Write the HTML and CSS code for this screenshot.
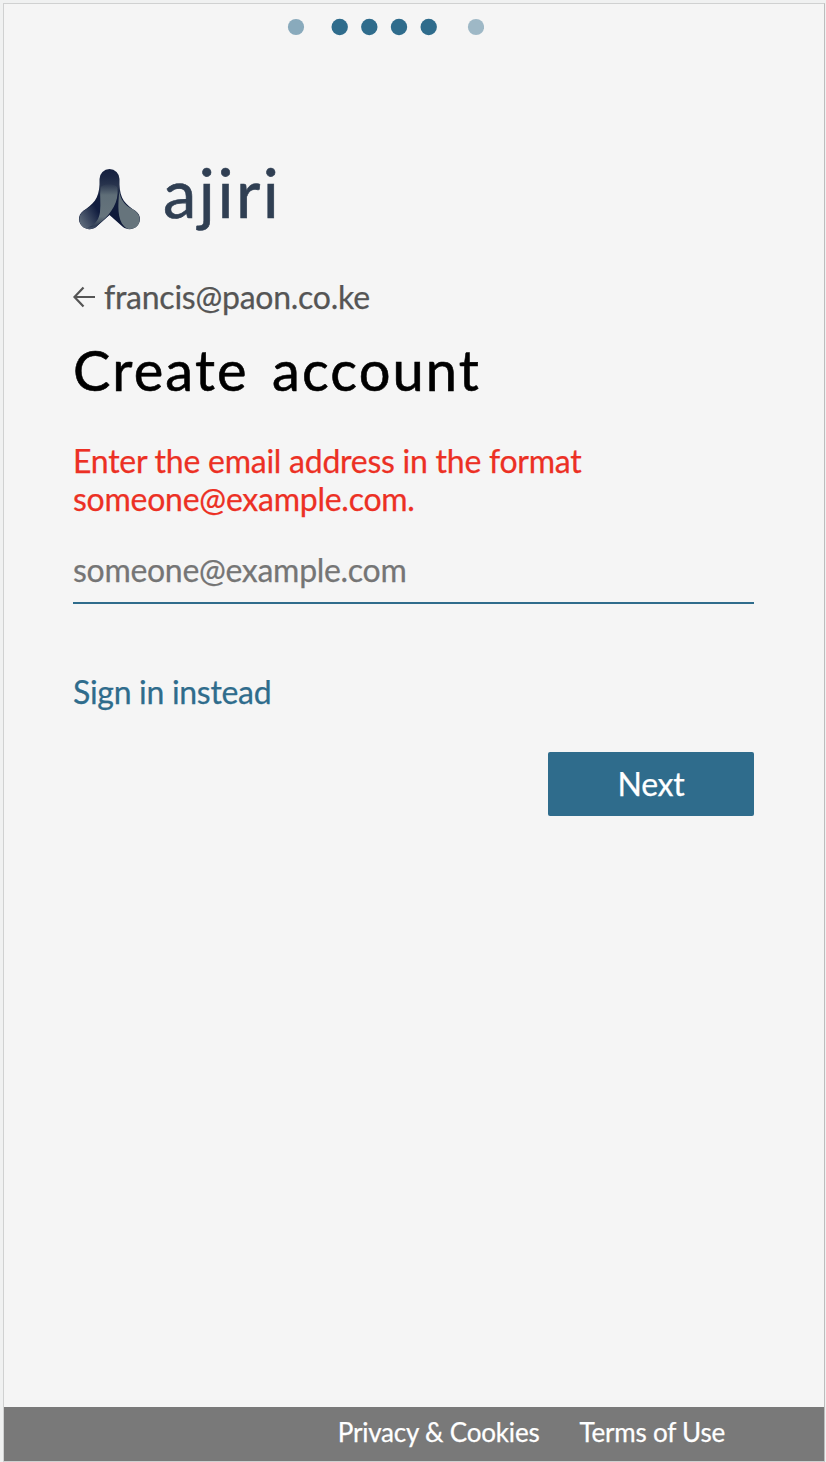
FILE: index.html
```html
<!DOCTYPE html>
<html lang="en">
<head>
<meta charset="utf-8">
<title>Create account</title>
<link rel="stylesheet" href="styles.css">
</head>
<body>
<div class="screen">
  <svg class="progress" viewBox="0 0 200 20" aria-hidden="true">
    <g fill="#2f6c8c">
      <circle cx="12" cy="10" r="8.1" opacity=".55"/>
      <circle cx="55.700" cy="10" r="8.200"/>
      <circle cx="85.300" cy="10" r="8.200"/>
      <circle cx="115" cy="10" r="8.200"/>
      <circle cx="144.700" cy="10" r="8.200"/>
      <circle cx="192" cy="10" r="8.100" opacity=".44"/>
    </g>
  </svg>
  <main class="content">
    <div class="brand">
      <svg class="mark" viewBox="0 0 80 80" aria-hidden="true">
        <defs>
          <linearGradient id="top" x1="0" y1="0" x2="0" y2="1">
            <stop offset="0" stop-color="#15203f"/><stop offset=".12" stop-color="#1b2643"/><stop offset=".3" stop-color="#2c3850"/><stop offset=".45" stop-color="#111c3c"/><stop offset="1" stop-color="#0d1838"/>
          </linearGradient>
          <linearGradient id="left" gradientUnits="userSpaceOnUse" x1="10" y1="61" x2="30" y2="50">
            <stop offset="0" stop-color="#5b6878"/><stop offset=".9" stop-color="#111d3f"/><stop offset="1" stop-color="#111d3f"/>
          </linearGradient>
          <linearGradient id="fold" x1="0" y1="0" x2="0" y2="1">
            <stop offset="0" stop-color="#2b374f"/><stop offset=".25" stop-color="#5f6e78"/><stop offset=".75" stop-color="#66747c"/><stop offset="1" stop-color="#28354e"/>
          </linearGradient>
        </defs>
        <path fill="url(#top)" d="M29.500 19a10 10 0 0 1 20 0c-.5 16 3 23 13 30C71 53 72 61 67 66c-4 4-10 4-14 1L39.500 55 26 67c-4 3-10 3-14-1-5-5-4-13 4-17 10-7 14-14 13.500-30Z"/>
        <path fill="url(#left)" d="M29.500 34c-2 7-6 11-13 15-8 4-9 12-4.500 17 4 4 10 4 14 1l13-12C35 50 31 44 29.500 34Z"/>
        <path fill="url(#fold)" d="M30.500 28c2-5 15-5 17 0 1.500 14-6 25-16 33.500-5 4-9 6-14 6 9-3 11.500-9 12.500-15.500 1-9-.5-17 .5-24Z"/>
        <path fill="#66747c" d="M49.300 31c1 8 5 14 13 18 8 4 9.500 12 5 17-4 4-10 4-13 .5C47 59 48 45 49.300 31Z"/>
      </svg>
      <span class="wordmark">ajiri</span>
    </div>
    <div class="identity">
      <svg class="arrow" viewBox="0 0 24 24" aria-hidden="true"><path d="M11.500 2.500 2.500 12l9 9.500M2.500 12H23" fill="none" stroke="#555" stroke-width="2.200"/></svg>
      <span class="identity-name">francis@paon.co.ke</span>
    </div>
    <h1 class="title">Create account</h1>
    <p class="error">Enter the email address in the format<br>someone@example.com.</p>
    <input class="email" type="email" placeholder="someone@example.com" aria-label="Email">
    <a class="signin">Sign in instead</a>
    <button class="next" type="button">Next</button>
  </main>
  <footer class="footer"><a class="privacy">Privacy &amp; Cookies</a><a class="terms">Terms of Use</a></footer>
</div>
</body>
</html>
```
FILE: styles.css
```css
* { box-sizing: border-box; }
body { margin: 0; height: 1462px; padding: 3px 1px 0 3px; background: #f0f1f1; font-family: Lato, sans-serif; font-size: 32px; line-height: 38px; letter-spacing: -.25px; -webkit-text-stroke: .25px currentColor; }
.screen { height: 1459px; display: flex; flex-direction: column; background: #f5f5f5; border: 1px solid #d0d1d1; border-right: 1px solid #bdbdbd; }
.progress { display: block; width: 200px; height: 20px; margin: 13px 0 0 280px; flex: none; }
.content { flex: 1; display: flex; flex-direction: column; padding: 0 69px; }
.brand { display: flex; height: 80px; margin-top: 123px; }
.mark { width: 80px; height: 80px; margin-left: -3px; flex: none; }
.wordmark { margin-left: 13px; font-size: 67px; line-height: 64px; letter-spacing: 2.5px; color: #303f53; -webkit-text-stroke: .6px #303f53; }
.identity { display: flex; align-items: center; height: 38px; margin-top: 38px; color: #555; }
.arrow { width: 24px; height: 24px; margin: 0 8px 0 -1px; flex: none; }
.title { margin: 19px 0 0; font-size: 56px; line-height: 70px; font-weight: 400; letter-spacing: 2.1px; word-spacing: 7px; color: #000; -webkit-text-stroke: .6px #000; white-space: nowrap; }
.error { margin: 37px 0 0; color: #ec3024; }
.email { width: 681px; height: 63px; margin: 23px 0 0; padding: 0 0 5px; border: 0; border-bottom: 2px solid #2f6c8c; border-radius: 0; background: transparent; font: inherit; letter-spacing: -.3px; outline: 0; }
.email::placeholder { color: #757575; opacity: 1; -webkit-text-stroke: .25px #757575; }
.signin { margin-top: 69px; color: #2f6c8c; letter-spacing: -.3px; }
.next { align-self: flex-end; width: 206px; height: 64px; margin: 41px 1px 0 0; padding: 0; border: 0; border-radius: 2px; background: #2f6c8c; color: #fff; font: inherit; letter-spacing: inherit; -webkit-text-stroke: .25px #fff; }
.footer { display: flex; justify-content: flex-end; gap: 40px; height: 54px; padding-right: 99px; background: #797979; color: #fff; font-size: 26px; line-height: 50px; letter-spacing: -.2px; white-space: nowrap; }
```
